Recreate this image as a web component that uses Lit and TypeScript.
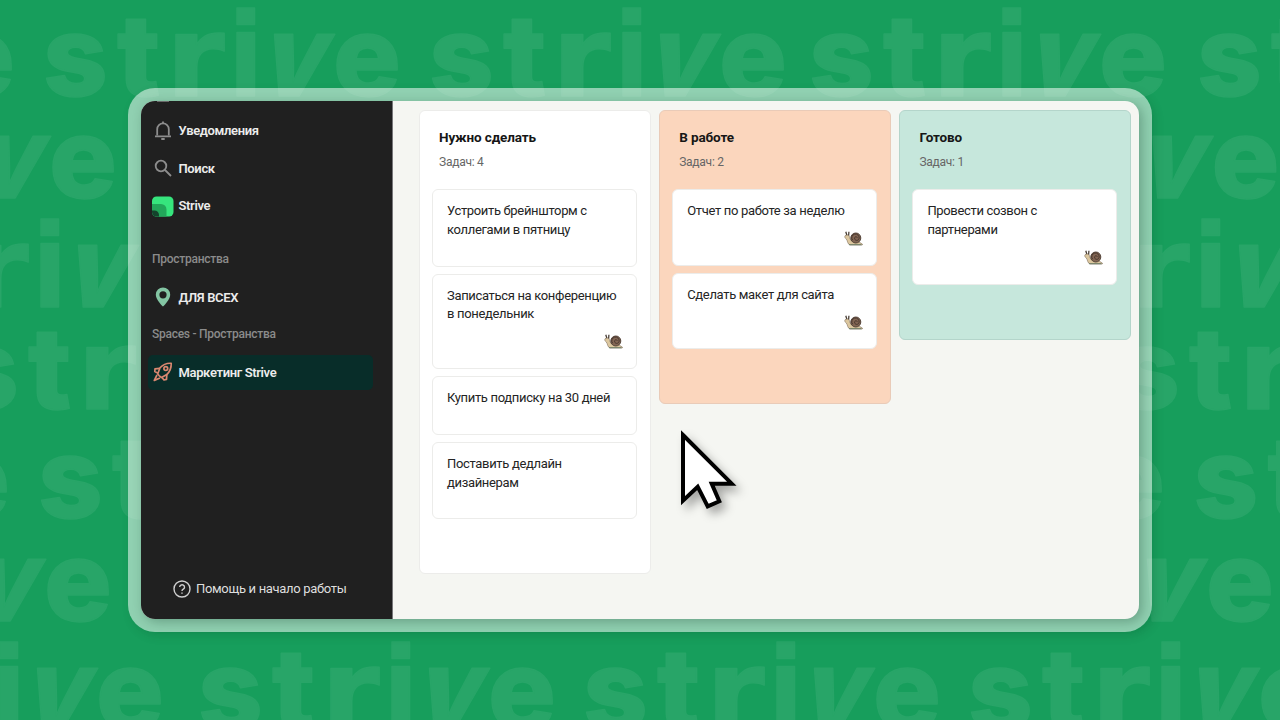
import { css, html, LitElement, svg } from 'lit';
import { customElement, property } from 'lit/decorators.js';

interface Task {
  lines: string[];
  assigned?: boolean;
}

interface Column {
  title: string;
  tone: string;
  tasks: Task[];
}

const COLUMNS: Column[] = [
  {
    title: 'Нужно сделать',
    tone: 'todo',
    tasks: [
      { lines: ['Устроить брейншторм с', 'коллегами в пятницу'] },
      { lines: ['Записаться на конференцию', 'в понедельник'], assigned: true },
      { lines: ['Купить подписку на 30 дней'] },
      { lines: ['Поставить дедлайн', 'дизайнерам'] },
    ],
  },
  {
    title: 'В работе',
    tone: 'doing',
    tasks: [
      { lines: ['Отчет по работе за неделю'], assigned: true },
      { lines: ['Сделать макет для сайта'], assigned: true },
    ],
  },
  {
    title: 'Готово',
    tone: 'done',
    tasks: [{ lines: ['Провести созвон с', 'партнерами'], assigned: true }],
  },
];

// baseline and word starts of every wallpaper row
const WALLPAPER = [
  { y: 96, words: [-341, 45, 431, 811, 1199] },
  { y: 198, words: [-239, 923.5] },
  { y: 307, words: [-151, 1010] },
  { y: 409, words: [-44, 1117] },
  { y: 518, words: [-346, 40, 809, 1195.5] },
  { y: 621, words: [-244, 918] },
  { y: 730, words: [-192, 200, 585, 970] },
];

// where each letter's ink starts within the word, and how wide it is
const LETTERS = [
  { char: 's', left: 0, width: 61, transform: 'translate(-2 0)' },
  { char: 't', left: 73, width: 40, transform: 'translate(72 0)' },
  { char: 'r', left: 130, width: 50, transform: 'translate(121 0) scale(1.06 1)' },
  { char: 'i', left: 192, width: 20, transform: 'translate(183.500 0) scale(.9 1.040)' },
  { char: 'v', left: 226, width: 62, transform: 'translate(213 0) skewX(-14) scale(.9 1)' },
  { char: 'e', left: 292, width: 66, transform: 'translate(288 0)' },
];

const bellIcon = svg`
  <path d="M5.2 15.4V9.2a5.8 5.8 0 0 1 11.6 0v6.2" />
  <path d="M3 16.3h16M11 3.4V1.6" />
  <path d="M9.3 19h3.4" />
`;

const searchIcon = svg`
  <circle cx="9" cy="9" r="5.3" />
  <path d="M13 13l6 6" />
`;

const logoIcon = svg`
  <rect width="21.500" height="20" x="0" y="1.500" rx="4.500" fill="#36e57d" stroke="none" />
  <path d="M0 9h9a5.500 5.500 0 0 1 5.500 5.500v7H4.500a4.500 4.500 0 0 1-4.500-4.500z" fill="#22a75a" stroke="none" />
  <path d="M0 15.500h2.500A4.500 4.500 0 0 1 7 20v1.500H4.500A4.500 4.500 0 0 1 0 17z" fill="#14432c" stroke="none" />
`;

const pinIcon = svg`
  <path
    d="M11 1.500a7.200 7.200 0 0 0-7.200 7.200C3.800 13.800 11 20.500 11 20.500s7.200-6.700 7.200-11.800A7.200 7.200 0 0 0 11 1.500zm0 3.700a3.600 3.600 0 1 1 0 7.200 3.600 3.600 0 0 1 0-7.200z"
    fill="#83c5a3"
    stroke="none"
  />
`;

const rocketIcon = svg`
  <g stroke="#d98770" stroke-width="1.700" stroke-linejoin="round">
    <path d="M7.300 14.800L5.700 13 8 6.800C11 3.500 14.500 2 19.200 2.300c.2 4.700-1.200 8.300-4.400 11.200l-5.300 3z" />
    <circle cx="13.800" cy="7.600" r="1.900" />
    <path d="M7.600 7.300L3 7.900l-.2 2.600 3.300 1.700M14.800 13.800l-.3 4.600-2.500.6-2-2.600" />
    <path d="M5 14l-2.700 5.400L8 17" />
  </g>
`;

const helpIcon = svg`
  <circle cx="10" cy="10" r="8" />
  <path d="M7.700 8.100a2.400 2.400 0 1 1 3.600 2.100c-.9.500-1.300.9-1.300 1.900M10 13.400v1.400" />
`;

@customElement('strive-wallpaper')
export class StriveWallpaper extends LitElement {
  render() {
    return html`
      <svg width="1280" height="720" viewBox="0 0 1280 720">
        ${WALLPAPER.map(row => row.words.map(x => this.word(x, row.y)))}
      </svg>
    `;
  }

  private word(x: number, y: number) {
    // letters off the canvas or fully behind the window are skipped
    const visible = LETTERS.filter(({ left, width }) => {
      const start = x + left;
      const end = start + width;
      const covered = y > 120 && y < 640 && start > 141 && end < 1139;
      return end > 0 && start < 1280 && !covered;
    });
    return svg`
      <g transform="translate(${x} ${y})">
        ${visible.map(
          ({ char, transform }) =>
            svg`<text class=${char} transform=${transform}>${char}</text>`,
        )}
      </g>
    `;
  }

  static styles = css`
    :host {
      display: block;
    }

    svg {
      display: block;
    }

    text {
      fill: #28a568;
      stroke: #28a568;
      stroke-width: 1.500;
      stroke-linejoin: round;
      font-family: Inter, sans-serif;
      font-size: 113px;
      font-weight: 800;
    }

    .r,
    .i {
      font-family: 'DejaVu Sans', sans-serif;
      font-size: 112px;
      font-weight: 700;
    }
  `;
}

@customElement('side-item')
export class SideItem extends LitElement {
  @property() label = '';

  @property({ type: Boolean, reflect: true }) active = false;

  @property({ attribute: false }) icon: unknown;

  render() {
    return html`
      <div class="item">
        <svg width="22" height="22" viewBox="0 0 22 22">${this.icon}</svg>
        <span>${this.label}</span>
      </div>
    `;
  }

  static styles = css`
    :host {
      display: block;
      padding: 1px 0;
    }

    .item {
      display: flex;
      align-items: center;
      gap: 4.500px;
      height: 35.500px;
      padding-left: 4px;
      border-radius: 5px;
      color: #ececec;
      font-size: 13px;
      font-weight: 600;
      letter-spacing: -0.36px;
    }

    :host([active]) .item {
      background: #082d29;
    }

    svg {
      fill: none;
      stroke: #8d8d8d;
      stroke-width: 1.800;
    }
  `;
}

@customElement('task-card')
export class TaskCard extends LitElement {
  @property({ attribute: false }) task!: Task;

  render() {
    return html`
      <div class="card">
        ${this.task.lines.map(line => html`<div class="line">${line}</div>`)}
        ${this.task.assigned ? this.snail : ''}
      </div>
    `;
  }

  private get snail() {
    return html`
      <div class="assignee">
        <svg width="19" height="15" viewBox="0 0 19 15">
          <path d="M3.200 5.500L1.800.8M4.600 5L4.900.8" stroke="#4a4038" stroke-width="1.300" />
          <path
            d="M1 4.800c1.500-1.300 3.700-1 4.300.5.500 1.900.9 3.400 2.300 4.700l6.800.5 4.100 2.700c.2.600-.3.900-.9.900H6.200C3.500 13.500 3.600 9.600 2.300 8 1.200 7.400.3 6 1 4.800z"
            fill="#dcc79f"
            stroke="#6d5a48"
            stroke-width=".5"
          />
          <path d="M5 13.700h12.500" stroke="#55705c" stroke-width=".8" />
          <circle cx="11.800" cy="7" r="5" fill="#826553" stroke="#4b3a30" stroke-width=".9" />
          <path
            d="M8.700 9.200a3.700 3.700 0 1 1 6.300-1.400c-.9 2.400-4.600 2-4.400-.7.200-1.800 2.600-1.800 2.600-.2"
            fill="none"
            stroke="#43332b"
            stroke-width=".9"
          />
        </svg>
      </div>
    `;
  }

  static styles = css`
    .card {
      padding: 12px 13.500px 25.700px 14px;
      border: 1px solid #ececea;
      border-radius: 6px;
      background: #fff;
      color: #242424;
      font-size: 13px;
      letter-spacing: -0.33px;
      line-height: 18.900px;
    }

    .line {
      white-space: nowrap;
    }

    .assignee {
      display: flex;
      justify-content: flex-end;
      box-sizing: border-box;
      height: 18px;
      padding-top: 10px;
    }

    svg {
      flex: none;
      margin-right: -0.500px;
    }
  `;
}

@customElement('board-column')
export class BoardColumn extends LitElement {
  @property({ attribute: false }) column!: Column;

  render() {
    const { title, tone, tasks } = this.column;
    return html`
      <section class="column ${tone}">
        <h2>${title}</h2>
        <p>Задач: ${tasks.length}</p>
        <div class="tasks">
          ${tasks.map(task => html`<task-card .task=${task}></task-card>`)}
        </div>
      </section>
    `;
  }

  static styles = css`
    .column {
      box-sizing: border-box;
      width: 231.500px;
      padding: 17px 12.500px 54px 12px;
      border: 1px solid #ececea;
      border-radius: 6px;
      background: #fff;
    }

    .doing {
      border-color: #e9cbb8;
      background: #fbd6bd;
    }

    .done {
      border-color: #b4d5cb;
      background: #c6e7dc;
    }

    h2 {
      margin: 0 0 7px 7px;
      color: #161616;
      font-size: 13.500px;
      font-weight: 700;
      letter-spacing: -0.12px;
      line-height: 19px;
    }

    p {
      margin: 0 0 18px 7px;
      color: #666;
      font-size: 12px;
      letter-spacing: -0.25px;
      line-height: 17px;
    }

    .tasks {
      display: flex;
      flex-direction: column;
      gap: 7px;
    }
  `;
}

@customElement('app-root')
export class AppRoot extends LitElement {
  render() {
    return html`
      <strive-wallpaper></strive-wallpaper>
      <div class="frame">
        <div class="window">
          <nav>
            <i class="scrolled"></i>
            <side-item label="Уведомления" .icon=${bellIcon}></side-item>
            <side-item label="Поиск" .icon=${searchIcon}></side-item>
            <side-item label="Strive" .icon=${logoIcon}></side-item>
            <div class="heading first">Пространства</div>
            <side-item label="ДЛЯ ВСЕХ" .icon=${pinIcon}></side-item>
            <div class="heading">Spaces - Пространства</div>
            <side-item label="Маркетинг Strive" active .icon=${rocketIcon}></side-item>
            <div class="help">
              <svg width="20" height="20" viewBox="0 0 20 20">${helpIcon}</svg>
              <span>Помощь и начало работы</span>
            </div>
          </nav>
          <main>
            ${COLUMNS.map(column => html`<board-column .column=${column}></board-column>`)}
          </main>
        </div>
      </div>
      <svg class="cursor" width="70" height="100" viewBox="0 0 70 100">
        <path d="M7 10L55.700 58.700h-20l7.600 17.600-11.600 5-10-19.600L7 75.700z" />
      </svg>
    `;
  }

  static styles = css`
    :host {
      display: grid;
      position: relative;
      width: 1280px;
      height: 720px;
      overflow: hidden;
      background: #179e5c;
      font-family: Roboto, 'Liberation Sans', sans-serif;
    }

    strive-wallpaper,
    .frame {
      grid-area: 1 / 1;
    }

    .frame {
      place-self: center;
      box-sizing: border-box;
      width: 1024px;
      height: 544px;
      padding: 13px;
      border-radius: 27px;
      background: rgba(255, 255, 255, 0.52);
      box-shadow: 3px 4px 10px rgba(0, 60, 30, 0.16);
      z-index: 1;
    }

    .window {
      display: flex;
      height: 518px;
      border-radius: 14px;
      overflow: hidden;
      background: #f5f6f2;
      box-shadow: 3px 3px 12px rgba(0, 40, 20, 0.28);
    }

    nav {
      display: flex;
      flex-direction: column;
      box-sizing: border-box;
      width: 252px;
      padding: 0 19px 19px 7px;
      border-right: 1px solid #77777a;
      background: #202020;
    }

    .scrolled {
      width: 12px;
      height: 1px;
      margin: 0 0 10px 9px;
      background: #6a6a6a;
    }

    .heading {
      padding-left: 4px;
      color: #8b8b8b;
      font-size: 12px;
      font-weight: 500;
      letter-spacing: -0.26px;
      line-height: 37.500px;
    }

    .first {
      margin-top: 16.500px;
    }

    .help {
      display: flex;
      align-items: center;
      gap: 4px;
      margin-top: auto;
      padding-left: 24px;
      color: #dedede;
      font-size: 13px;
      letter-spacing: -0.32px;
      line-height: 22px;
    }

    .help svg {
      fill: none;
      stroke: #cfcfcf;
      stroke-width: 1.400;
    }

    main {
      display: flex;
      align-items: flex-start;
      gap: 8.700px;
      padding: 9px 0 0 26px;
    }

    .cursor {
      position: absolute;
      top: 425px;
      left: 676px;
      z-index: 2;
      overflow: visible;
      fill: #fff;
      stroke: #000;
      stroke-width: 4;
      filter: drop-shadow(5px 6px 5px rgba(0, 0, 0, 0.32));
    }
  `;
}
